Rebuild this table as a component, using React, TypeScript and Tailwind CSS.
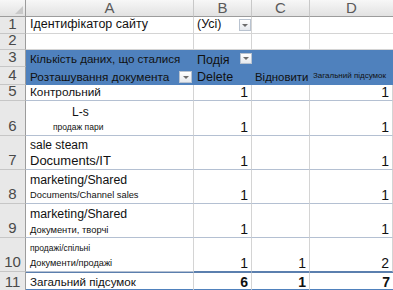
import React from "react";

const font = { fontFamily: '"Liberation Sans", Arial, sans-serif' };

const DropBtn = ({ className = "" }: { className?: string }) => (
  <div
    className={`flex items-center justify-center border border-[#b9c3d0] bg-gradient-to-b from-white to-[#e6e9ee] ${className}`}
  >
    <div className="w-0 h-0 border-l-[3px] border-r-[3px] border-t-[3px] border-l-transparent border-r-transparent border-t-[#6d6d6d]" />
  </div>
);

const ColHead = ({ label, last = false }: { label: string; last?: boolean }) => (
  <div
    className={`flex items-center justify-center bg-gradient-to-b from-[#f7f7f7] to-[#e2e2e2] border-b border-[#9c9c9c] text-[15px] text-[#5a5a5a] ${
      last ? "" : "border-r border-r-[#c8c8c8]"
    }`}
  >
    {label}
  </div>
);

const RowHead = ({ n }: { n: number }) => (
  <div className="flex items-end justify-center pb-[1px] bg-[#e8e8e8] border-r border-r-[#9c9c9c] border-b border-b-[#c6c6c6] text-[15px] leading-[16px] text-[#4a4a4a]">
    {n}
  </div>
);

const Num = ({ v, line = "border-b-[#b4c0d2]" }: { v?: string; line?: string }) => (
  <div
    className={`flex items-end justify-end pr-[3px] pb-[1px] border-r border-r-[#d4d4d4] border-b ${line} text-[14px] leading-[13px] text-[#111]`}
  >
    {v}
  </div>
);

const Two = ({
  a,
  b,
  ac,
  bc,
  pad = "pl-[4px]",
}: {
  a: string;
  b: string;
  ac: string;
  bc: string;
  pad?: string;
}) => (
  <div
    className={`flex flex-col justify-end items-start pb-[1px] border-r border-r-[#d4d4d4] border-b border-b-[#b4c0d2] text-[#111] overflow-hidden ${pad}`}
  >
    <div className={`whitespace-nowrap ${ac}`}>{a}</div>
    <div className={`whitespace-nowrap ${bc}`}>{b}</div>
  </div>
);

const Total = ({ v, last = false }: { v: string; last?: boolean }) => (
  <div
    className={`flex items-start justify-end pr-[3px] pt-[2px] border-t border-t-[#5b7fae] border-b-[3px] border-b-[#4f81bd] text-[14px] leading-[14px] font-bold text-[#111] ${
      last ? "" : "border-r border-r-[#d4d4d4]"
    }`}
  >
    {v}
  </div>
);

export default function App() {
  return (
    <div className="w-[393px] h-[290px] overflow-hidden bg-white" style={font}>
      <div className="grid grid-cols-[26px_168px_58px_58px_83px] grid-rows-[17px_17px_16px_17px_18px_16px_35px_34px_34px_34px_34px_20px]">
        {/* column headers */}
        <div className="flex items-end justify-end p-[2px] bg-gradient-to-b from-[#f7f7f7] to-[#e2e2e2] border-r border-r-[#9c9c9c] border-b border-b-[#9c9c9c]">
          <div className="w-0 h-0 border-b-[8px] border-l-[8px] border-b-[#c9c9c9] border-l-transparent" />
        </div>
        <ColHead label="A" />
        <ColHead label="B" />
        <ColHead label="C" />
        <ColHead label="D" last />

        {/* row 1 */}
        <RowHead n={1} />
        <div className="flex items-end pl-[4px] pb-[2px] border-r border-[#d4d4d4] border-b text-[12.5px] leading-[14px] text-[#111] whitespace-nowrap">
          Ідентифікатор сайту
        </div>
        <div className="flex items-end justify-between pl-[3px] pb-[1px] border-r border-[#d4d4d4] border-b text-[12.5px] leading-[15px] text-[#111]">
          <span>(Усі)</span>
          <DropBtn className="w-[12px] h-[12px] mb-[1px]" />
        </div>
        <div className="border-r border-b border-[#d4d4d4]" />
        <div className="border-b border-[#d4d4d4]" />

        {/* row 2 */}
        <RowHead n={2} />
        <div className="border-r border-b border-[#d4d4d4]" />
        <div className="border-r border-b border-[#d4d4d4]" />
        <div className="border-r border-b border-[#d4d4d4]" />
        <div className="border-b border-[#d4d4d4]" />

        {/* row 3 */}
        <RowHead n={3} />
        <div className="flex items-end pl-[4px] pb-[1px] bg-[#4f81bd] text-[11.6px] leading-[14px] text-[#111] whitespace-nowrap">
          Кількість даних, що сталися
        </div>
        <div className="flex items-end justify-between pl-[3px] bg-[#4f81bd] text-[12.5px] leading-[14px] text-[#111]">
          <span>Подія</span>
          <DropBtn className="w-[12px] h-[11px] self-start mt-[3px]" />
        </div>
        <div className="bg-[#4f81bd]" />
        <div className="bg-[#4f81bd]" />

        {/* row 4 */}
        <RowHead n={4} />
        <div className="flex items-end justify-between pl-[4px] pb-[1px] bg-[#4f81bd] text-[11.8px] leading-[14px] text-[#111] whitespace-nowrap">
          <span>Розташування документа</span>
          <DropBtn className="w-[13px] h-[12px] mr-[2px] mb-[1px]" />
        </div>
        <div className="flex items-end pl-[3px] pb-[1px] bg-[#4f81bd] text-[12.5px] leading-[14px] text-[#111]">
          Delete
        </div>
        <div className="flex items-end pl-[3px] pb-[1px] bg-[#4f81bd] text-[11.4px] leading-[14px] text-[#111] whitespace-nowrap">
          Відновити
        </div>
        <div className="flex items-end pl-[3px] pb-[5px] bg-[#4f81bd] text-[8px] leading-[9px] text-[#111] whitespace-nowrap">
          Загальний підсумок
        </div>

        {/* row 5 */}
        <RowHead n={5} />
        <div className="flex items-end pl-[4px] pb-0 border-r border-r-[#d4d4d4] border-b border-b-[#b4c0d2] text-[11.8px] leading-[15px] text-[#111] whitespace-nowrap overflow-hidden">
          Контрольний
        </div>
        <Num v="1" />
        <Num />
        <Num v="1" />

        {/* row 6 */}
        <RowHead n={6} />
        <Two
          a="L-s"
          b="продаж пари"
          ac="text-[12px] leading-[18px] pl-[19px]"
          bc="text-[8.5px] leading-[13px]"
          pad="pl-[27px]"
        />
        <Num v="1" />
        <Num />
        <Num v="1" />

        {/* row 7 */}
        <RowHead n={7} />
        <Two a="sale steam" b="Documents/IT" ac="text-[12px] leading-[15px]" bc="text-[13px] leading-[15px]" />
        <Num v="1" />
        <Num />
        <Num v="1" />

        {/* row 8 */}
        <RowHead n={8} />
        <Two
          a="marketing/Shared"
          b="Documents/Channel sales"
          ac="text-[12.3px] leading-[18px]"
          bc="text-[9.3px] leading-[13px]"
        />
        <Num v="1" />
        <Num />
        <Num v="1" />

        {/* row 9 */}
        <RowHead n={9} />
        <Two
          a="marketing/Shared"
          b="Документи, творчі"
          ac="text-[12.3px] leading-[17px]"
          bc="text-[9.4px] leading-[13px]"
        />
        <Num v="1" />
        <Num />
        <Num v="1" />

        {/* row 10 */}
        <RowHead n={10} />
        <Two
          a="продажі/спільні"
          b="Документи/продажі"
          ac="text-[8.5px] leading-[18px]"
          bc="text-[9.2px] leading-[13px]"
        />
        <Num v="1" line="border-b-[#5b7fae]" />
        <Num v="1" line="border-b-[#5b7fae]" />
        <Num v="2" line="border-b-[#5b7fae]" />

        {/* row 11 */}
        <RowHead n={11} />
        <div className="flex items-start pl-[4px] pt-[2px] border-t border-t-[#5b7fae] border-b-[3px] border-b-[#4f81bd] border-r border-r-[#d4d4d4] text-[11.6px] leading-[14px] text-[#111] whitespace-nowrap">
          Загальний підсумок
        </div>
        <Total v="6" />
        <Total v="1" />
        <Total v="7" last />
      </div>
    </div>
  );
}
